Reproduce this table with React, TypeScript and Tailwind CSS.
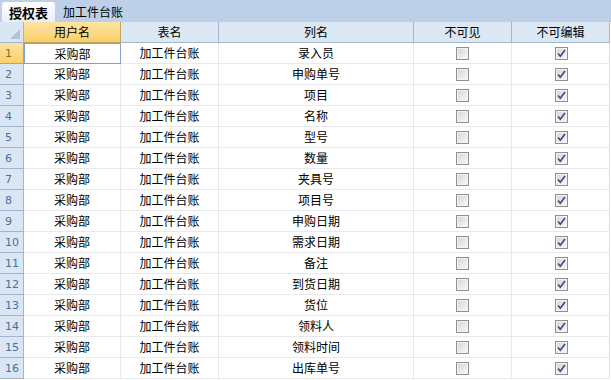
import React from "react";

const cols = ["录入员","申购单号","项目","名称","型号","数量","夹具号","项目号","申购日期","需求日期","备注","到货日期","货位","领料人","领料时间","出库单号"];

function Box({ checked }: { checked: boolean }) {
  return (
    <div className="w-[13px] h-[13px] border border-[#8e8f8f] bg-gradient-to-br from-[#dcdcdc] to-[#fbfbfb] flex items-center justify-center">
      <div className="w-[11px] h-[11px] border border-[#f4f4f4] bg-gradient-to-br from-[#d8d8d8] to-[#f6f6f6] flex items-center justify-center">
        {checked && (
          <svg width="9" height="9" viewBox="0 0 9 9">
            <path d="M1 4.5 L3.3 7.2 L8 1" stroke="#3c4a8c" strokeWidth="1.7" fill="none" />
          </svg>
        )}
      </div>
    </div>
  );
}

export default function App() {
  const font = { fontFamily: '"Noto Sans CJK SC", "Noto Sans", sans-serif' };
  return (
    <div className="w-[611px] h-[380px] bg-white overflow-hidden text-[12px] text-black" style={font}>
      <div className="h-[22px] bg-[#bed0e7] flex items-end">
        <div className="h-[20px] ml-[2px] px-[7px] rounded-t-[3px] bg-gradient-to-b from-[#ffffff] to-[#e9eff7] font-bold flex items-center text-[13px] leading-none">授权表</div>
        <div className="h-[20px] px-[8px] flex items-center leading-none text-[12px]">加工件台账</div>
      </div>
      <div className="grid grid-cols-[24px_97px_98px_195px_98px_98px] w-[610px] border-r border-[#d8dfe8]">
        <div className="h-[21px] bg-[#dbe6f4] border-r border-b border-[#9eb6ce] relative">
          <div className="absolute right-[3px] bottom-[3px] w-0 h-0 border-l-[10px] border-l-transparent border-b-[10px] border-b-[#b4c3d4]" />
        </div>
        <div className="h-[21px] bg-gradient-to-b from-[#fde4a2] to-[#f9cf66] border-r border-b border-[#c1a164] flex items-center justify-center leading-none">用户名</div>
        {["表名","列名","不可见","不可编辑"].map((h) => (
          <div key={h} className="h-[21px] bg-[#dce7f4] border-r border-b border-[#a3b8cf] flex items-center justify-center leading-none">{h}</div>
        ))}
        {cols.map((c, i) => (
          <React.Fragment key={c}>
            <div className={`h-[21px] border-r border-b flex items-center pl-[5px] leading-none text-[11px] ${i === 0 ? "bg-gradient-to-b from-[#fde4a2] to-[#f9cf66] text-[#8a6d2c] border-[#c1a164]" : "bg-[#dbe6f4] text-[#45729f] border-[#9eb6ce]"}`} style={{ fontFamily: '"DejaVu Sans", sans-serif' }}>{i + 1}</div>
            <div className={`h-[21px] flex items-center justify-center leading-none ${i === 0 ? "border border-[#7fa4d0]" : "border-r border-b border-[#e6e9ee]"}`}>采购部</div>
            <div className="h-[21px] border-r border-b border-[#e6e9ee] flex items-center justify-center leading-none">加工件台账</div>
            <div className="h-[21px] border-r border-b border-[#e6e9ee] flex items-center justify-center leading-none">{c}</div>
            <div className="h-[21px] border-r border-b border-[#e6e9ee] flex items-center justify-center"><Box checked={false} /></div>
            <div className="h-[21px] border-b border-[#e6e9ee] flex items-center justify-center"><Box checked={true} /></div>
          </React.Fragment>
        ))}
      </div>
    </div>
  );
}
